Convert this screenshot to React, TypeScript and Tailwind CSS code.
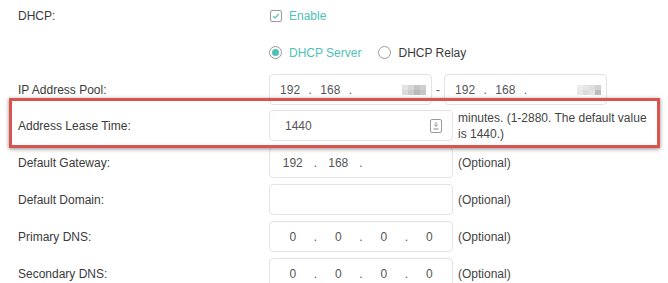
import React from 'react';

const font = { fontFamily: '"Liberation Sans", Arial, sans-serif' };

type Seg = string | 'blur1' | 'blur2' | '';

const BLUR1 = ['#e2e2e2', '#d6d6d6', '#c4c4c4', '#cfcfcf', '#dadada', '#cbcbcb', '#b9b9b9', '#c6c6c6'];
const BLUR2 = ['#ececec', '#e6e6e6', '#dedede', '#d2d2d2', '#e8e8e8', '#dcdcdc', '#e4e4e4', '#bdbdbd'];

const Blur = ({ colors }: { colors: string[] }) => (
  <div className="grid grid-cols-4 w-[24px] h-[10px] ml-[6px]">
    {colors.map((c, i) => (
      <div key={i} className="w-[6px] h-[5px]" style={{ backgroundColor: c }} />
    ))}
  </div>
);

const IpInput = ({ w, segs, dots }: { w: string; segs: Seg[]; dots: number }) => (
  <div className={`${w} h-[31px] flex items-center border border-[#e3e3e3] rounded-[4px] bg-white text-[12px] text-[#555]`}>
    {segs.map((s, i) => (
      <React.Fragment key={i}>
        <div className="flex-1 flex justify-center">
          {s === 'blur1' ? <Blur colors={BLUR1} /> : s === 'blur2' ? <Blur colors={BLUR2} /> : <span>{s}</span>}
        </div>
        {i < 3 && (
          <div className="w-0 flex justify-center">
            <span className={i < dots ? '' : 'invisible'}>.</span>
          </div>
        )}
      </React.Fragment>
    ))}
  </div>
);

const Row = ({ label, children, className = '' }: { label?: string; children: React.ReactNode; className?: string }) => (
  <div className={`flex items-center h-[31px] ${className}`}>
    <div className="w-[251px] shrink-0 text-[12px] text-[#3a3a3a]">{label}</div>
    {children}
  </div>
);

const Optional = () => <span className="ml-[5px] text-[12px] text-[#444]">(Optional)</span>;

export default function App() {
  return (
    <div className="relative w-[668px] h-[283px] overflow-hidden bg-white" style={font}>
      <div className="flex flex-col pl-[18px]">
        <Row label="DHCP:" className="h-[30px]">
          <label className="flex items-center gap-[7px] ml-[1px]">
            <span className="w-[12px] h-[12px] rounded-[2px] border border-[#9a9a9a] flex items-center justify-center">
              <svg width="8" height="8" viewBox="0 0 8 8">
                <path d="M1.2 4.2 L3.2 6 L6.8 1.8" fill="none" stroke="#4ec2b6" strokeWidth="1.2" />
              </svg>
            </span>
            <span className="text-[12px] text-[#4ec2b6]">Enable</span>
          </label>
        </Row>
        <Row className="h-[30px] mt-[6px]">
          <div className="flex items-center">
            <span className="w-[13px] h-[13px] rounded-full border border-[#9a9a9a] flex items-center justify-center">
              <span className="w-[7px] h-[7px] rounded-full bg-[#4ec2b6]" />
            </span>
            <span className="ml-[7px] text-[12px] text-[#4ec2b6]">DHCP Server</span>
            <span className="ml-[17px] w-[13px] h-[13px] rounded-full border border-[#9a9a9a]" />
            <span className="ml-[7px] text-[12px] text-[#3a3a3a]">DHCP Relay</span>
          </div>
        </Row>
        <Row label="IP Address Pool:" className="mt-[6px]">
          <IpInput w="w-[163px]" segs={['192', '168', '', 'blur1']} dots={2} />
          <span className="mx-[4px] text-[12px] text-[#555]">-</span>
          <IpInput w="w-[163px]" segs={['192', '168', '', 'blur2']} dots={2} />
        </Row>
        <Row label="Address Lease Time:" className="mt-[5px]">
          <div className="w-[184px] h-[31px] flex items-center justify-between border border-[#e3e3e3] rounded-[4px] pl-[15px] pr-[10px] text-[12px] text-[#555]">
            <span>1440</span>
            <svg width="12" height="14" viewBox="0 0 12 14">
              <rect x="0.5" y="0.5" width="11" height="13" rx="1.5" fill="none" stroke="#9a9a9a" />
              <path d="M6 3 L6 7.5 M4.2 5.6 L6 7.5 L7.8 5.6" fill="none" stroke="#9a9a9a" strokeWidth="1" />
              <path d="M3.5 10 L8.5 10" stroke="#9a9a9a" strokeWidth="1.2" />
            </svg>
          </div>
          <div className="ml-[5px] w-[196px] text-[12px] leading-[16px] text-[#444]">
            minutes. (1-2880. The default value is 1440.)
          </div>
        </Row>
        <Row label="Default Gateway:" className="mt-[6px]">
          <IpInput w="w-[184px]" segs={['192', '168', '', '']} dots={2} />
          <Optional />
        </Row>
        <Row label="Default Domain:" className="mt-[6px]">
          <div className="w-[184px] h-[31px] border border-[#e3e3e3] rounded-[4px]" />
          <Optional />
        </Row>
        <Row label="Primary DNS:" className="mt-[6px]">
          <IpInput w="w-[184px]" segs={['0', '0', '0', '0']} dots={3} />
          <Optional />
        </Row>
        <Row label="Secondary DNS:" className="mt-[6px]">
          <IpInput w="w-[184px]" segs={['0', '0', '0', '0']} dots={3} />
          <Optional />
        </Row>
      </div>
      <div className="absolute left-[9px] top-[98px] w-[651px] h-[50px] border-[3px] border-[#d9534f] shadow-[0_1px_4px_rgba(0,0,0,0.45)] pointer-events-none" />
    </div>
  );
}
